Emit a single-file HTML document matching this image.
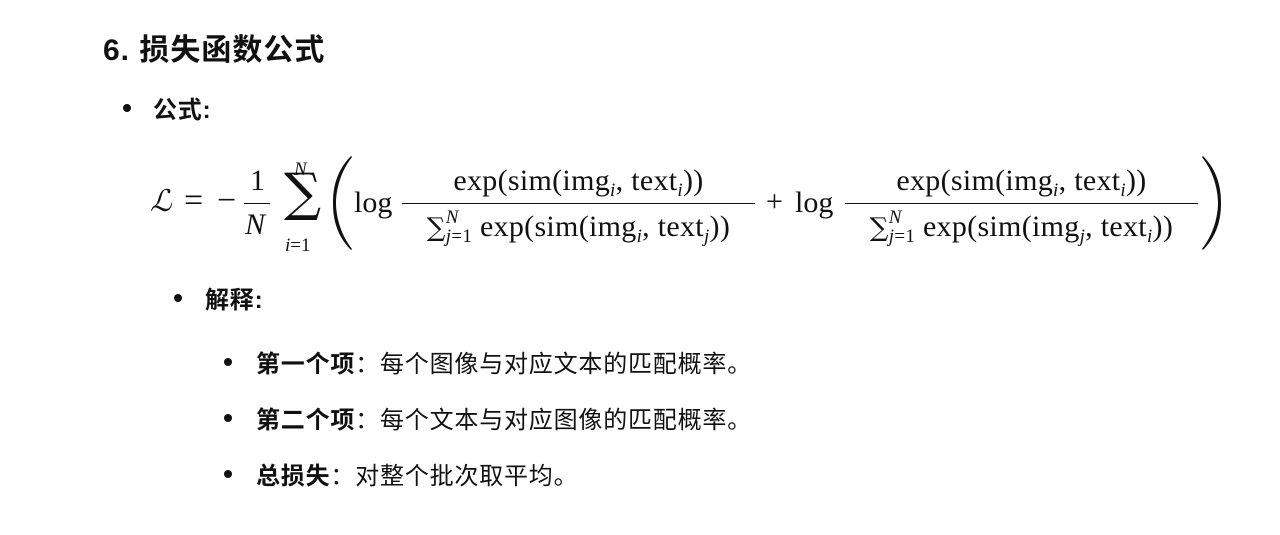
<!DOCTYPE html>
<html><head><meta charset="utf-8"><style>
body{margin:0;width:1280px;height:535px;background:#fff;position:relative;overflow:hidden;color:#111;font-family:"Liberation Sans","Noto Sans CJK SC",sans-serif}
.a{position:absolute;white-space:nowrap}
.h{font-size:30px;font-weight:bold;letter-spacing:1px;left:103px;top:25px}
.t{font-size:24px;letter-spacing:0.8px}
.b{font-weight:bold}
.dot{position:absolute;width:8px;height:8px;border-radius:50%;background:#111}
.m{font-family:"Liberation Serif","DejaVu Serif",serif;font-size:30px;line-height:30px}
.i{font-style:italic}
.s{font-size:19px}
.fl{position:absolute;height:1.3px;background:#111}
.f{position:absolute;text-align:center;font-family:"Liberation Serif",serif;font-size:30px;line-height:30px;white-space:nowrap;letter-spacing:0.3px}
sub,sup{font-size:19px;line-height:0}
sub{position:relative;vertical-align:baseline;top:6px}
sup{position:relative;vertical-align:baseline;top:-13px}
</style></head><body>
<div class="a h">6. 损失函数公式</div>
<div class="dot" style="left:123px;top:104px"></div>
<div class="a t b" style="left:153px;top:90px">公式:</div>

<div class="a m" style="left:150px;top:187px;font-family:'DejaVu Serif',serif;font-style:italic;font-size:30px">ℒ</div>
<div class="a m" style="left:184px;top:186px;font-size:34px">=</div>
<div class="a m" style="left:217px;top:186px;font-size:34px">−</div>
<div class="a m" style="left:250px;top:166px">1</div>
<div class="fl" style="left:244px;top:203px;width:26px"></div>
<div class="a m i" style="left:245px;top:210px">N</div>
<div class="a" style="left:284px;top:167px;font-family:'DejaVu Serif',serif;font-size:52px;line-height:52px">∑</div>
<div class="a m i s" style="left:294px;top:155px">N</div>
<div class="a m s" style="left:285px;top:231px"><i>i</i>=1</div>
<svg class="a" style="left:332px;top:155px" width="24" height="96" viewBox="0 0 24 96"><path d="M20 2 C6 20 4 40 4 48 C4 56 6 76 20 94 L19 95 C2 78 1 58 1 48 C1 38 2 18 19 1 Z" fill="#111"/></svg>
<div class="a m" style="left:354px;top:188px">log</div>
<div class="f" style="left:402px;width:353px;top:166px">exp(sim(img<sub><i>i</i></sub>, text<sub><i>i</i></sub>))</div>
<div class="fl" style="left:402px;top:203px;width:353px"></div>
<div class="f" style="left:402px;width:353px;top:212px"><span style="font-family:'DejaVu Serif',serif;font-size:26px">∑</span><sup><i>N</i></sup><sub style="margin-left:-13px"><i>j</i>=1</sub> exp(sim(img<sub><i>i</i></sub>, text<sub><i>j</i></sub>))</div>
<div class="a m" style="left:766px;top:187px">+</div>
<div class="a m" style="left:795px;top:188px">log</div>
<div class="f" style="left:845px;width:353px;top:166px">exp(sim(img<sub><i>i</i></sub>, text<sub><i>i</i></sub>))</div>
<div class="fl" style="left:845px;top:203px;width:353px"></div>
<div class="f" style="left:845px;width:353px;top:212px"><span style="font-family:'DejaVu Serif',serif;font-size:26px">∑</span><sup><i>N</i></sup><sub style="margin-left:-13px"><i>j</i>=1</sub> exp(sim(img<sub><i>j</i></sub>, text<sub><i>i</i></sub>))</div>
<svg class="a" style="left:1198px;top:155px" width="24" height="96" viewBox="0 0 24 96"><path d="M4 2 C18 20 20 40 20 48 C20 56 18 76 4 94 L5 95 C22 78 23 58 23 48 C23 38 22 18 5 1 Z" fill="#111"/></svg>

<div class="dot" style="left:174px;top:294px"></div>
<div class="a t b" style="left:205px;top:280px">解释:</div>
<div class="dot" style="left:224px;top:358px"></div>
<div class="a t" style="left:256px;top:344px"><span class="b">第一个项</span>：每个图像与对应文本的匹配概率。</div>
<div class="dot" style="left:224px;top:414px"></div>
<div class="a t" style="left:256px;top:400px"><span class="b">第二个项</span>：每个文本与对应图像的匹配概率。</div>
<div class="dot" style="left:224px;top:470px"></div>
<div class="a t" style="left:256px;top:456px"><span class="b">总损失</span>：对整个批次取平均。</div>
</body></html>
